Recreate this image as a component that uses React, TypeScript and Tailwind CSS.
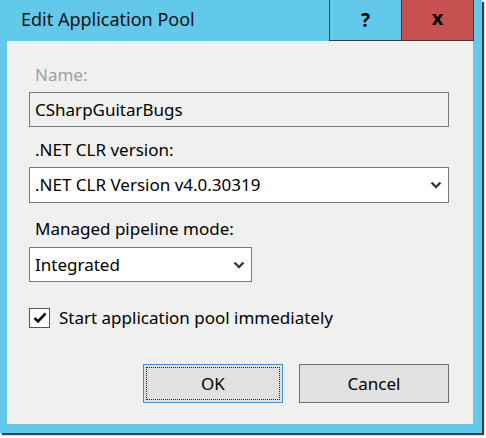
function Chevron() {
  return (
    <svg width="12" height="8" viewBox="0 0 12 8" className="shrink-0">
      <polyline points="1.5,1.5 6,6 10.5,1.5" fill="none" stroke="#3c3c3c" strokeWidth="2.4" />
    </svg>
  );
}

export default function App() {
  return (
    <div className="w-[486px] h-[438px] bg-white font-['Noto_Sans',sans-serif] text-black">
      <div className="w-[482px] h-[433px] bg-[#62c9ea] flex flex-col shadow-[2px_2px_1px_rgba(0,0,0,0.75)]">
        {/* Title bar */}
        <div className="h-[41px] flex items-start shrink-0">
          <span className="ml-[21px] mt-[7px] text-[18px] leading-[24px] text-[#111]">
            Edit Application Pool
          </span>
          <div className="ml-auto mr-[8px] flex h-[41px] border-l border-r border-b border-[#3a3a3a]">
            <div className="w-[72px] flex items-center justify-center text-[19px] font-bold border-r border-[#3a3a3a]">
              ?
            </div>
            <div className="w-[71px] bg-[#c75050] flex items-center justify-center text-[20px] font-bold leading-none pb-[4px]">
              x
            </div>
          </div>
        </div>

        {/* Client area */}
        <div className="ml-[7px] mr-[9px] mb-[9px] flex-1 bg-[#f0f0f0] pt-[24px] pl-[22px] pr-[24px] text-[17px] leading-[20px]">
          <div className="pl-[6px] text-[#a0a0a0] mb-[7px]">Name:</div>
          <div className="w-[420px] h-[35px] border border-[#7a7a7a] bg-[#f0f0f0] flex items-center pl-[5px]">
            CSharpGuitarBugs
          </div>

          <div className="pl-[6px] mt-[13px] mb-[7px]">.NET CLR version:</div>
          <div className="w-[420px] h-[36px] border border-[#7a7a7a] bg-white flex items-center pl-[5px] pr-[6px]">
            <span className="flex-1">.NET CLR Version v4.0.30319</span>
            <Chevron />
          </div>

          <div className="pl-[6px] mt-[16px] mb-[8px]">Managed pipeline mode:</div>
          <div className="w-[223px] h-[35px] border border-[#7a7a7a] bg-white flex items-center pl-[5px] pr-[6px]">
            <span className="flex-1">Integrated</span>
            <Chevron />
          </div>

          <div className="mt-[26px] flex items-center gap-[9px]">
            <div className="w-[21px] h-[20px] border border-[#555] bg-white flex items-center justify-center">
              <svg width="14" height="12" viewBox="0 0 14 12">
                <polyline points="1.5,6 5,9.5 12.5,1.5" fill="none" stroke="#111" strokeWidth="2.6" />
              </svg>
            </div>
            <span>Start application pool immediately</span>
          </div>

          <div className="mt-[36px] flex justify-end gap-[16px]">
            <button className="w-[140px] h-[39px] border border-[#3c8ee0] bg-[#e1e1e1] p-[2px]">
              <div className="w-full h-full border border-dotted border-[#222] flex items-center justify-center">
                OK
              </div>
            </button>
            <button className="w-[150px] h-[39px] border border-[#707070] bg-[#e1e1e1] flex items-center justify-center">
              Cancel
            </button>
          </div>
        </div>
      </div>
    </div>
  );
}
